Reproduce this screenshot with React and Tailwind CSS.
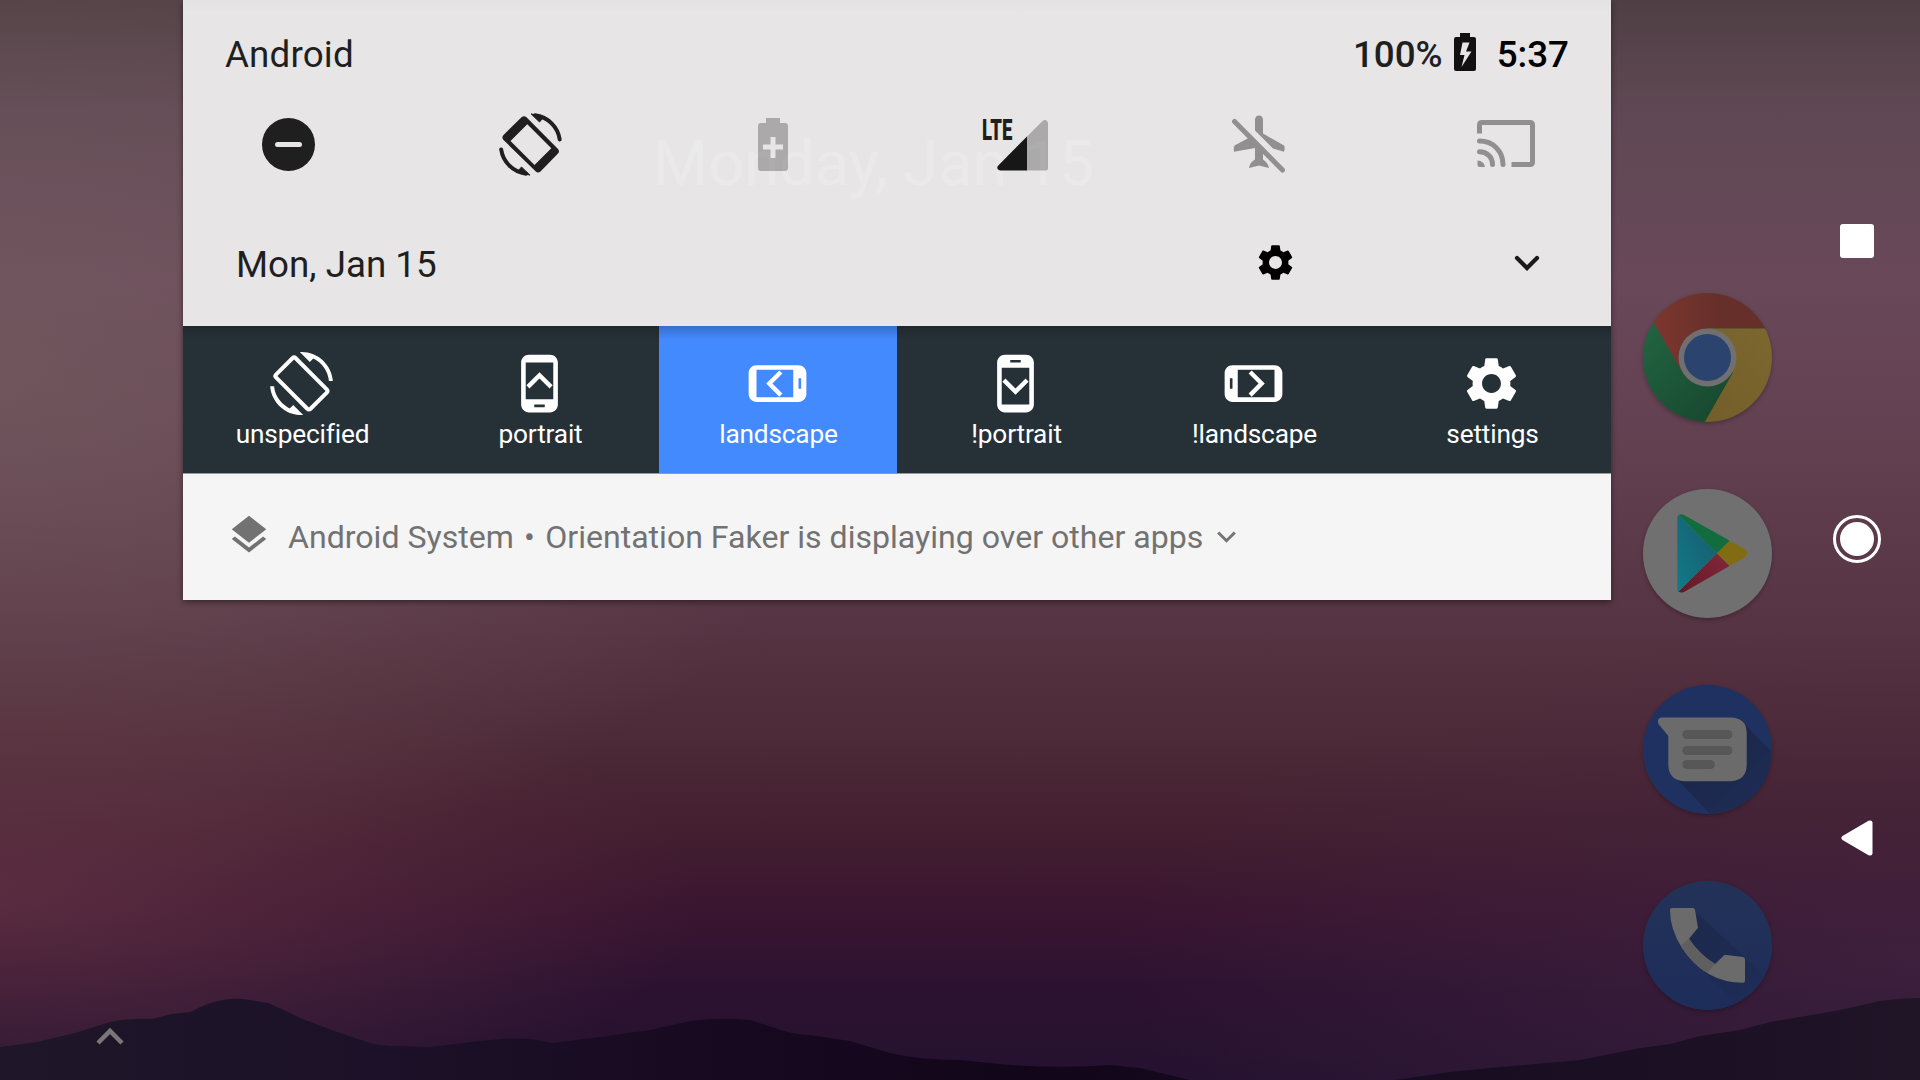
import React from 'react';
import { MdScreenRotation, MdSettings, MdLayers } from 'react-icons/md';

function Wallpaper() {
  return (
    <div className="absolute inset-0 bg-[linear-gradient(180deg,#4f3f44_0px,#5f4853_110px,#694859_280px,#624050_450px,#583544_610px,#4d2a37_740px,#431f30_830px,#3a1530_910px,#2c1230_990px,#241230_1080px)]">
      <div className="absolute inset-0 bg-[radial-gradient(ellipse_850px_520px_at_0px_380px,#78616399,#78616300)]" />
      <div className="absolute inset-0 bg-[radial-gradient(ellipse_700px_250px_at_0px_900px,#6e3a4a99,#6e3a4a00)]" />
      <div className="absolute inset-0 bg-[radial-gradient(ellipse_800px_330px_at_1920px_960px,#45284499,#45284400)]" />
      <svg className="absolute inset-0" width="1920" height="1080" viewBox="0 0 1920 1080">
        <defs>
          <linearGradient id="ridge" gradientUnits="userSpaceOnUse" x1="0" x2="1920" y1="0" y2="0">
            <stop offset="0" stopColor="#1f1629" />
            <stop offset="0.2" stopColor="#1c1128" />
            <stop offset="0.38" stopColor="#170920" />
            <stop offset="0.55" stopColor="#12061a" />
            <stop offset="0.8" stopColor="#1a0e22" />
            <stop offset="1" stopColor="#1f1527" />
          </linearGradient>
        </defs>
        <path
          fill="url(#ridge)"
          d="M0 1047L37 1042L75 1033L110 1022Q130 1018 152 1019L172 1014L190 1012Q205 1004 218 1001Q234 997 250 1000L268 1003Q285 1010 300 1018L340 1033L370 1043Q385 1047 400 1046L430 1047L470 1042Q510 1037 532 1039L552 1043L600 1037L650 1030L690 1021Q720 1017 750 1020L775 1028Q790 1034 810 1035L850 1041L890 1053Q920 1060 960 1060L1000 1064Q1060 1069 1110 1065L1140 1068L1190 1080H0Z"
        />
        <path
          fill="url(#ridge)"
          d="M1395 1080L1450 1072L1500 1067L1580 1060L1640 1048L1670 1044L1700 1036L1740 1030L1770 1022L1840 1010L1880 1001Q1900 998 1920 998V1080Z"
        />
        <path d="M98 1043L110 1031L122 1043" fill="none" stroke="#7b7779" strokeWidth="4.500" />
      </svg>
    </div>
  );
}

function AutoRotate() {
  return (
    <svg width="63" height="63" viewBox="0 0 63 63" fill="none" stroke="#1f1f1f">
      <path
        fill="#1f1f1f"
        stroke="none"
        fillRule="evenodd"
        d="M22.500 4.300Q25 2.200 27.500 4.300L59 36Q61 38.300 59 40.600L41.500 58.500Q39 60.500 36.800 58.500L4.500 27Q2.300 24.500 4.500 22ZM28.300 11.200L11.500 28L35.500 52L52.300 35.200Z"
      />
      <path d="M36 2.300C49 4 59 14 60.700 26.500" strokeWidth="4" strokeLinecap="round" />
      <path d="M27 60.700C14 59 4 49 2.200 36.500" strokeWidth="4" strokeLinecap="round" />
      <path d="M32 .8L40.500 9L44 5Z M31 62.200L22.500 54L19 58Z" fill="#1f1f1f" strokeWidth="1" />
    </svg>
  );
}

function QuickIcons() {
  return (
    <div className="flex h-[66px] items-center pl-[78.500px]">
      <div className="flex h-[53px] w-[53px] items-center justify-center rounded-full bg-[#1f1f1f]">
        <div className="h-[5px] w-[27px] rounded-full bg-[#e7e5e6]" />
      </div>
      <div className="ml-[184.500px]">
        <AutoRotate />
      </div>
      <svg className="ml-[196px]" width="30" height="53" viewBox="0 0 30 53">
        <path
          fill="#000"
          fillOpacity=".26"
          fillRule="evenodd"
          d="M8 0H22V5H27Q30 5 30 8V50Q30 53 27 53H3Q0 53 0 50V8Q0 5 3 5H8ZM12.500 19V26.500H5V31.500H12.500V40H17.500V31.500H25V26.500H17.500V19Z"
        />
      </svg>
      <div className="relative ml-[194px] h-[53px] w-[66px]">
        <span className="absolute left-0 top-[-3px] origin-left scale-x-[0.640] text-[29px] font-black leading-[30px] text-[#1f1f1f]">
          LTE
        </span>
        <svg className="absolute left-[15px] top-[1px]" width="51" height="52" viewBox="0 0 51 52">
          <path d="M30 17.500L46 1.500Q50 -.5 51 4V49Q51 51.500 48.500 51.500H30Z" fill="#000" fillOpacity=".26" />
          <path d="M30 17.500V51.500H3Q-1 50.500 .8 47Z" fill="#171717" />
        </svg>
      </div>
      <svg className="ml-[183px]" width="56" height="58" viewBox="0 0 56 58" fill="#918f90">
        <path d="M24 4.500Q24.500 .5 28 .5Q31.500 .5 32 4.500V18.500L53 30.500Q54.300 33 53 36.800L42 33.500L24 15.500Z" />
        <path d="M18.500 22.500L32 36V44.500Q37 47.500 38 53L28 50.500L18 53Q18.500 47.500 24 44.500V33L3 36.800Q2 33 3.500 30.500Z" />
        <path d="M3.500 6.500L51.500 55" fill="none" stroke="#918f90" strokeWidth="5" strokeLinecap="round" />
      </svg>
      <svg className="ml-[190px]" width="58" height="48" viewBox="0 0 58 48" fill="none" stroke="#918f90" strokeWidth="5">
        <path d="M2.500 13.500V5Q2.500 2.500 5 2.500H53Q55.500 2.500 55.500 5V42Q55.500 44.500 53 44.500H34.500" />
        <path d="M2.500 21C16 21 26 31 26 44.500M2.500 31.800C10 31.800 15.500 37 15.500 44.500" strokeLinecap="round" />
        <path d="M.5 40.500Q7 41 8 47H2.500Q.5 47 .5 45Z" fill="#918f90" stroke="none" />
      </svg>
    </div>
  );
}

function PhoneGlyph({ turn }) {
  return (
    <svg width="63" height="63" viewBox="0 0 24 24" fill="#fff" className={turn}>
      <path d="M16 1H8C6.340 1 5 2.340 5 4v16c0 1.660 1.340 3 3 3h8c1.660 0 3-1.340 3-3V4c0-1.660-1.340-3-3-3zm-2 20h-4v-1h4v1zm3.250-3H6.750V4h10.500v14z" />
      <path d="M12 7.700L7 12.700L8.170 13.870L12 10.060L15.830 13.870L17 12.700Z" />
    </svg>
  );
}

const tiles = [
  { label: 'unspecified', icon: <MdScreenRotation size={63} /> },
  { label: 'portrait', icon: <PhoneGlyph turn="" /> },
  { label: 'landscape', icon: <PhoneGlyph turn="-rotate-90" />, active: true },
  { label: '!portrait', icon: <PhoneGlyph turn="rotate-180" /> },
  { label: '!landscape', icon: <PhoneGlyph turn="rotate-90" /> },
  { label: 'settings', icon: <MdSettings size={63} /> },
];

function Shade() {
  return (
    <div className="relative h-[600px] w-[1428px] shrink-0 shadow-[0_2px_6px_rgba(0,0,0,0.45)]">
      <div className="relative h-[326px] overflow-hidden bg-[#e7e5e6]">
        <div className="absolute inset-x-0 top-0 h-3 bg-gradient-to-b from-[#e3e3e3] to-[#e7e5e6]" />
        <span className="absolute left-[470px] top-[126px] whitespace-nowrap text-[63.200px] leading-[75px] text-[#ebeaeb]">
          Monday, Jan 15
        </span>
        <div className="relative flex h-[111px] items-center pl-[42px] pr-[42px]">
          <span className="mt-[-2px] text-[36.750px] leading-[44px] tracking-[0.150px] text-[#1f1f1f]">Android</span>
          <span className="ml-auto mt-[-2px] text-[36.750px] font-medium leading-[44px] text-[#1f1f1f]">100%</span>
          <svg className="ml-[11px] mt-[-7px]" width="22" height="38" viewBox="0 0 22 38">
            <path
              fill="#111"
              fillRule="evenodd"
              d="M6 0H16V4H20Q22 4 22 6V36Q22 38 20 38H2Q0 38 0 36V6Q0 4 2 4H6ZM8.500 9.500L6 22H10.500L7.500 34L17.500 18.500H12L15.500 9.500Z"
            />
          </svg>
          <span className="ml-[21px] mt-[-2px] text-[36.750px] font-medium leading-[44px] text-black">5:37</span>
        </div>
        <div className="relative">
          <QuickIcons />
        </div>
        <div className="relative mt-[64px] flex h-[44px] items-center pl-[53px] pr-[71px]">
          <span className="mt-[3px] text-[36.750px] leading-[44px] text-[#1f1f1f]">Mon, Jan 15</span>
          <MdSettings size={43} className="ml-auto mt-[-1px] text-black" />
          <svg className="ml-[217px]" width="26" height="16" viewBox="0 0 26 16">
            <path d="M3 3L13 13L23 3" fill="none" stroke="#1a1a1a" strokeWidth="4.200" strokeLinecap="round" />
          </svg>
        </div>
      </div>
      <div className="relative flex h-[147px] bg-[#263137]">
        {tiles.map((t) => (
          <div
            key={t.label}
            className={
              t.active
                ? 'flex w-[238px] flex-col items-center bg-[#448aff] pt-[26px] text-white'
                : 'flex w-[238px] flex-col items-center pt-[26px] text-white'
            }
          >
            <div className="mr-[2px]">{t.icon}</div>
            <span className="ml-[1px] mt-[3px] text-[26.250px] leading-[32px] tracking-[-0.180px]">{t.label}</span>
          </div>
        ))}
        <div className="absolute inset-x-0 top-0 h-[14px] bg-gradient-to-b from-black/20 to-transparent" />
      </div>
      <div className="flex h-[127px] items-center border-t border-[#969b9e] bg-[#f5f5f5] pl-[42.500px] text-[#727272]">
        <MdLayers size={46} className="mt-[-4px]" />
        <span className="ml-[16.500px] whitespace-nowrap text-[32.100px] leading-[38px]">
          Android System<span className="mx-[2.300px]"> • </span>Orientation Faker is displaying over other apps
        </span>
        <svg className="ml-[14px]" width="19" height="12" viewBox="0 0 19 12">
          <path d="M1.200 1.500L9.500 9.700L17.800 1.500" fill="none" stroke="#757575" strokeWidth="3" />
        </svg>
      </div>
    </div>
  );
}

function Chrome() {
  return (
    <svg width="129" height="129" viewBox="0 0 129 129">
      <defs>
        <clipPath id="disc">
          <circle cx="64.500" cy="64.500" r="64.500" />
        </clipPath>
        <linearGradient id="chromeRed" x1="0" x2="1">
          <stop offset=".1" stopColor="#7d372f" />
          <stop offset=".6" stopColor="#672f2a" />
        </linearGradient>
        <linearGradient id="chromeGreen" x1="0" x2="1" y1="0" y2="1">
          <stop offset="0" stopColor="#236a46" />
          <stop offset=".7" stopColor="#194b31" />
        </linearGradient>
        <linearGradient id="chromeYellow" x1="1" x2="0" y1="0" y2="1">
          <stop offset="0" stopColor="#7d672f" />
          <stop offset="1" stopColor="#735e2a" />
        </linearGradient>
      </defs>
      <g clipPath="url(#disc)">
        <path fill="url(#chromeGreen)" d="M0 0H129V129H0Z" />
        <path fill="url(#chromeRed)" d="M-6.800 0L39.500 79.400L64.500 64.500V35.500H129V0Z" />
        <path fill="url(#chromeYellow)" d="M64.500 35.500H129V129H61.800L90 79.400L64.500 64.500Z" />
      </g>
      <circle cx="64.500" cy="64.500" r="29" fill="#707070" />
      <circle cx="64.500" cy="64.500" r="23.500" fill="#2b446f" />
    </svg>
  );
}

function Play() {
  return (
    <svg width="129" height="129" viewBox="0 0 129 129">
      <defs>
        <clipPath id="playShape">
          <path d="M34.300 28.500Q35.500 23.500 41 26L101.500 60Q107 64.300 101.500 68.600L41 103Q35.500 105 34.300 100Z" />
        </clipPath>
        <linearGradient id="playBlue" x1="1" x2="0" y1="0" y2="1">
          <stop offset="0" stopColor="#175a6c" />
          <stop offset="1" stopColor="#127a88" />
        </linearGradient>
        <linearGradient id="playRed" x1="1" x2="0" y1="0" y2="1">
          <stop offset="0" stopColor="#84283a" />
          <stop offset="1" stopColor="#5f1724" />
        </linearGradient>
      </defs>
      <circle cx="64.500" cy="64.500" r="64.500" fill="#707070" />
      <g clipPath="url(#playShape)">
        <path fill="#126d3d" d="M34 20V24.500L74 64.300L86.500 52L60 20Z" />
        <path fill="url(#playRed)" d="M34 110V104L74 64.300L86.500 77L60 110Z" />
        <path fill="#816c12" d="M74 64.300L90 48.500L110 64.300L90 80Z" />
        <path fill="url(#playBlue)" d="M34 24.500L74 64.300L34 104Z" />
      </g>
    </svg>
  );
}

function Messages() {
  return (
    <svg width="129" height="129" viewBox="0 0 129 129">
      <defs>
        <linearGradient id="msgShadow" x1="0" x2="1" y1="0" y2="1">
          <stop offset=".4" stopColor="#1c274a" />
          <stop offset="1" stopColor="#1e2e59" />
        </linearGradient>
      </defs>
      <circle cx="64.500" cy="64.500" r="64.500" fill="#1f3160" />
      <path fill="url(#msgShadow)" d="M100 38L128.500 66Q127 120 67 129L32 92Z" />
      <path
        fill="#6b6b6b"
        d="M18.500 32.500H88Q103.700 33 103.700 48V80Q103.500 95 88 96.300H41Q25.800 95 25.300 80V51L15.500 39Q13.500 33.500 18.500 32.500Z"
      />
      <g fill="#575757">
        <rect x="39.300" y="45" width="50" height="9" rx="4.500" />
        <rect x="39.300" y="61" width="50" height="9" rx="4.500" />
        <rect x="39.300" y="75" width="32.500" height="9" rx="4.500" />
      </g>
    </svg>
  );
}

function Phone() {
  return (
    <svg width="129" height="129" viewBox="0 0 129 129">
      <defs>
        <linearGradient id="phoneFill" x1=".5" x2=".5" y1="0" y2="1">
          <stop offset="0" stopColor="#223257" />
          <stop offset="1" stopColor="#1d2d5a" />
        </linearGradient>
        <linearGradient id="phoneShadow" x1="0" x2="1" y1="0" y2="1">
          <stop offset="0" stopColor="#1d294c" />
          <stop offset="1" stopColor="#1e2d58" />
        </linearGradient>
      </defs>
      <circle cx="64.500" cy="64.500" r="64.500" fill="url(#phoneFill)" />
      <path fill="url(#phoneShadow)" d="M54 32L122 95Q112 113 92 122L64 94L46 58Z" />
      <path
        fill="#6b6b6b"
        d="M29 27H50Q51.700 27 52 29L55 46.700L46 57.700Q56 73 72 83L81.700 73.700L100 76Q102 76.300 102 78.500V99.500Q102 101.700 100 101.700Q62 101.700 39 67Q27 48 27 29Q27 27 29 27Z"
      />
      <path fill="#5f5f5f" d="M46 57.700Q56 73 72 83L64.300 92Q48 82 37.700 64.500Z" />
    </svg>
  );
}

export default function App() {
  return (
    <div className="relative h-[1080px] w-[1920px] overflow-hidden font-['Roboto',sans-serif]">
      <Wallpaper />
      <div className="relative flex h-full items-start pl-[183px]">
        <Shade />
        <div className="flex w-[183px] shrink-0 flex-col gap-[67px] pl-[32px] pt-[293px]">
          {[Chrome, Play, Messages, Phone].map((Icon, i) => (
            <div key={i} className="h-[129px] w-[129px] rounded-full shadow-[0_2px_4px_rgba(0,0,0,0.25)]">
              <Icon />
            </div>
          ))}
        </div>
        <div className="flex w-[126px] shrink-0 flex-col items-center pt-[224px]">
          <div className="h-[34px] w-[34px] rounded-[3px] bg-white" />
          <div className="mr-[1px] mt-[257px] flex h-[48px] w-[48px] items-center justify-center rounded-full border-[3px] border-white">
            <div className="h-[34px] w-[34px] rounded-full bg-white" />
          </div>
          <svg className="mt-[257px]" width="32" height="36" viewBox="0 0 32 36">
            <path d="M27.500 .8Q31 -.5 31.500 2.500V33.500Q31 36.500 27.500 35.200L1.500 20Q-.8 18 1.500 16Z" fill="#fff" />
          </svg>
        </div>
      </div>
    </div>
  );
}
